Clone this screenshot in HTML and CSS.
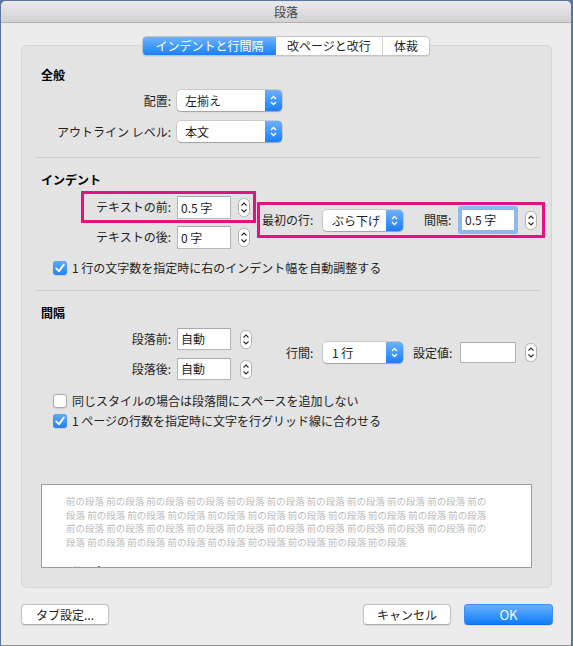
FILE: index.html
```html
<!DOCTYPE html>
<html lang="ja">
<head>
<meta charset="utf-8">
<title>段落</title>
<link rel="stylesheet" href="styles.css">
</head>
<body>
<div class="win">
  <div class="titlebar">段落</div>
  <div class="tabs">
    <span class="seg sel">インデントと行間隔</span><span class="seg s2">改ページと改行</span><span class="seg s3">体裁</span>
  </div>
  <div class="panel">
    <div class="heading h-general">全般</div>
    <div class="frow r1">
      <span class="lbl lw149">配置:</span>
      <span class="popup w105"><span class="ptext">左揃え</span><span class="parrow"><svg width="7" height="11" viewBox="0 0 7 11"><path d="M1 4 L3.5 1.5 L6 4 M1 7 L3.5 9.5 L6 7" fill="none" stroke="#fff" stroke-width="1.3"/></svg></span></span>
    </div>
    <div class="frow r2">
      <span class="lbl lw149">アウトライン レベル:</span>
      <span class="popup w105"><span class="ptext">本文</span><span class="parrow"><svg width="7" height="11" viewBox="0 0 7 11"><path d="M1 4 L3.5 1.5 L6 4 M1 7 L3.5 9.5 L6 7" fill="none" stroke="#fff" stroke-width="1.3"/></svg></span></span>
    </div>
    <div class="sep sep1"></div>

    <div class="heading h-indent">インデント</div>
    <div class="indent">
      <div class="icol">
        <div class="irow mark">
          <span class="lbl lw87">テキストの前:</span>
          <span class="field fw54">0.5 字</span>
          <span class="stepper st7"><svg width="12" height="19" viewBox="0 0 12 19"><rect x=".5" y=".5" width="11" height="18" rx="5" fill="#fff" stroke="#b0b0b0"/><path d="M3.5 7.5 L6 5 L8.5 7.5 M3.5 11.5 L6 14 L8.5 11.5" fill="none" stroke="#2b2b2b" stroke-width="1.1"/></svg></span>
        </div>
        <div class="irow irow2">
          <span class="lbl lw87">テキストの後:</span>
          <span class="field fw54">0 字</span>
          <span class="stepper st7"><svg width="12" height="19" viewBox="0 0 12 19"><rect x=".5" y=".5" width="11" height="18" rx="5" fill="#fff" stroke="#b0b0b0"/><path d="M3.5 7.5 L6 5 L8.5 7.5 M3.5 11.5 L6 14 L8.5 11.5" fill="none" stroke="#2b2b2b" stroke-width="1.1"/></svg></span>
        </div>
      </div>
      <div class="igroup mark">
        <span class="lbl lw55">最初の行:</span>
        <span class="popup w80"><span class="ptext pt9">ぶら下げ</span><span class="parrow"><svg width="7" height="11" viewBox="0 0 7 11"><path d="M1 4 L3.5 1.5 L6 4 M1 7 L3.5 9.5 L6 7" fill="none" stroke="#fff" stroke-width="1.3"/></svg></span></span>
        <span class="lbl lw28 ml21">間隔:</span>
        <span class="field fw54 focus">0.5 字</span>
        <span class="stepper st10"><svg width="12" height="19" viewBox="0 0 12 19"><rect x=".5" y=".5" width="11" height="18" rx="5" fill="#fff" stroke="#b0b0b0"/><path d="M3.5 7.5 L6 5 L8.5 7.5 M3.5 11.5 L6 14 L8.5 11.5" fill="none" stroke="#2b2b2b" stroke-width="1.1"/></svg></span>
      </div>
    </div>
    <div class="cbrow cb-auto">
      <span class="cb on"><svg width="14" height="14" viewBox="0 0 14 14"><path d="M3.2 7.4 L5.9 10.2 L10.8 3.6" fill="none" stroke="#fff" stroke-width="1.9" stroke-linecap="round" stroke-linejoin="round"/></svg></span>
      <span>1 行の文字数を指定時に右のインデント幅を自動調整する</span>
    </div>
    <div class="sep sep2"></div>

    <div class="heading h-spacing">間隔</div>
    <div class="spacing">
      <div class="scol">
        <div class="srow">
          <span class="lbl lw149">段落前:</span>
          <span class="field fw54 fh22">自動</span>
          <span class="stepper st9"><svg width="12" height="19" viewBox="0 0 12 19"><rect x=".5" y=".5" width="11" height="18" rx="5" fill="#fff" stroke="#b0b0b0"/><path d="M3.5 7.5 L6 5 L8.5 7.5 M3.5 11.5 L6 14 L8.5 11.5" fill="none" stroke="#2b2b2b" stroke-width="1.1"/></svg></span>
        </div>
        <div class="srow srow2">
          <span class="lbl lw149">段落後:</span>
          <span class="field fw54 fh22">自動</span>
          <span class="stepper st9"><svg width="12" height="19" viewBox="0 0 12 19"><rect x=".5" y=".5" width="11" height="18" rx="5" fill="#fff" stroke="#b0b0b0"/><path d="M3.5 7.5 L6 5 L8.5 7.5 M3.5 11.5 L6 14 L8.5 11.5" fill="none" stroke="#2b2b2b" stroke-width="1.1"/></svg></span>
        </div>
      </div>
      <div class="sgroup">
        <span class="lbl lw29">行間:</span>
        <span class="popup w80"><span class="ptext pt9">1 行</span><span class="parrow"><svg width="7" height="11" viewBox="0 0 7 11"><path d="M1 4 L3.5 1.5 L6 4 M1 7 L3.5 9.5 L6 7" fill="none" stroke="#fff" stroke-width="1.3"/></svg></span></span>
        <span class="lbl lw38 ml10">設定値:</span>
        <span class="field fw56 fh21"></span>
        <span class="stepper st9"><svg width="12" height="19" viewBox="0 0 12 19"><rect x=".5" y=".5" width="11" height="18" rx="5" fill="#fff" stroke="#b0b0b0"/><path d="M3.5 7.5 L6 5 L8.5 7.5 M3.5 11.5 L6 14 L8.5 11.5" fill="none" stroke="#2b2b2b" stroke-width="1.1"/></svg></span>
      </div>
    </div>
    <div class="cbrow cb-a">
      <span class="cb"></span>
      <span>同じスタイルの場合は段落間にスペースを追加しない</span>
    </div>
    <div class="cbrow cb-b">
      <span class="cb on"><svg width="14" height="14" viewBox="0 0 14 14"><path d="M3.2 7.4 L5.9 10.2 L10.8 3.6" fill="none" stroke="#fff" stroke-width="1.9" stroke-linecap="round" stroke-linejoin="round"/></svg></span>
      <span>1 ページの行数を指定時に文字を行グリッド線に合わせる</span>
    </div>

    <div class="preview">
      <div class="pv-line">前の段落 前の段落 前の段落 前の段落 前の段落 前の段落 前の段落 前の段落 前の段落 前の段落 前の</div>
      <div class="pv-line">段落 前の段落 前の段落 前の段落 前の段落 前の段落 前の段落 前の段落 前の段落 前の段落 前の段落</div>
      <div class="pv-line">前の段落 前の段落 前の段落 前の段落 前の段落 前の段落 前の段落 前の段落 前の段落 前の段落 前の</div>
      <div class="pv-line">段落 前の段落 前の段落 前の段落 前の段落 前の段落 前の段落 前の段落 前の段落</div>
      <div class="pv-next">サンプル</div>
    </div>
  </div>

  <div class="buttons">
    <span class="btn b-tab">タブ設定...</span>
    <span class="btn b-cancel">キャンセル</span>
    <span class="btn b-ok">OK</span>
  </div>
</div>
</body>
</html>
```

FILE: styles.css
```css
* { box-sizing: border-box; }

body {
  margin: 0;
  background: #5a76a0;
  font-family: "Noto Sans CJK JP", "Noto Sans", sans-serif;
  font-size: 12px;
  color: #1e1e1e;
}

.win {
  width: 570px;
  height: 645px;
  margin: 1px 0 0 1px;
  background: #ececec;
  border-radius: 5px 5px 0 0;
  border-bottom: 1px solid #8f8f8f;
  overflow: hidden;
}

.titlebar {
  height: 22px;
  line-height: 21px;
  text-align: center;
  color: #3f3f3f;
  background: linear-gradient(#ebe9eb, #d3d1d3);
  border-bottom: 1px solid #b0b0b0;
}

/* segmented tabs */
.tabs {
  position: relative;
  z-index: 1;
  display: flex;
  width: 288px;
  height: 20px;
  margin: 13px auto 0;
  background: #fff;
  border: 1px solid #c4c4c4;
  border-radius: 4px;
  overflow: hidden;
  box-shadow: 0 1px 1px rgba(0,0,0,.08);
}
.seg {
  text-align: center;
  line-height: 18px;
  color: #1e1e1e;
}
.seg.sel {
  width: 133px;
  background: linear-gradient(#6db3fb, #1980fb);
  color: #fff;
}
.seg.s2 { width: 106px; }
.seg.s3 { flex: 1; border-left: 1px solid #d4d4d4; }

/* panel */
.panel {
  width: 531px;
  height: 543px;
  margin: -11px 0 0 20px;
  background: #e3e3e3;
  border: 1px solid #d6d6d6;
  border-radius: 5px;
}

.heading {
  font-weight: bold;
  line-height: 16px;
  margin-left: 19px;
  color: #000;
}
.h-general { margin-top: 21px; }
.h-indent { margin-top: 14px; }
.h-spacing { margin-top: 14px; }

.lbl {
  flex: none;
  line-height: 16px;
  white-space: nowrap;
}
.lw149 { width: 149px; margin-right: 6px; text-align: right; }
.lw87 { width: 87px; margin-right: 6px; text-align: right; }
.lw55 { width: 55px; margin-right: 6px; }
.lw28 { width: 28px; margin-right: 9px; }
.lw29 { width: 29px; margin-right: 8px; }
.lw38 { width: 38px; margin-right: 9px; }
.ml21 { margin-left: 21px; }
.ml10 { margin-left: 10px; }

.frow {
  display: flex;
  align-items: center;
  height: 21px;
}
.r1 { margin-top: 7px; }
.r2 { margin-top: 10px; }

/* popup button */
.popup {
  display: flex;
  flex: none;
  height: 21px;
  background: #fff;
  border-radius: 4px;
  box-shadow: 0 0 0 .5px rgba(0,0,0,.22), 0 1px 1px rgba(0,0,0,.2);
}
.w105 { width: 105px; }
.w80 { width: 80px; }
.ptext {
  flex: 1;
  padding-left: 8px;
  line-height: 21px;
  white-space: nowrap;
}
.ptext.pt9 { padding-left: 9px; }
.parrow {
  width: 17px;
  flex: none;
  display: flex;
  align-items: center;
  justify-content: center;
  background: linear-gradient(#6cb1fa, #1a7ffa);
  border-radius: 0 4px 4px 0;
}
.parrow svg { display: block; }

/* text field */
.field {
  flex: none;
  height: 23px;
  background: #fff;
  border: 1px solid #b6b6b6;
  border-top-color: #a8a8a8;
  padding-left: 3px;
  line-height: 21px;
  white-space: nowrap;
}
.fw54 { width: 54px; }
.fw56 { width: 56px; }
.fh22 { height: 22px; line-height: 20px; }
.fh21 { height: 21px; }
.field.focus {
  height: 22px;
  line-height: 20px;
  border-color: #8fb3e3;
  box-shadow: 0 0 0 3px #8db8ee;
  border-radius: 1px;
}

.stepper { flex: none; display: flex; }
.stepper svg { display: block; }
.st7 { margin-left: 7px; }
.st9 { margin-left: 9px; }
.st10 { margin-left: 10px; }

.sep {
  height: 1px;
  width: 506px;
  margin-left: 13px;
  background: #cdcdcd;
}
.sep1 { margin-top: 15px; }
.sep2 { margin-top: 14px; }

/* indent block */
.mark { outline: 3px solid #e4127f; }

.indent {
  display: flex;
  align-items: flex-start;
  margin: 6px 0 0 62px;
}
.icol { width: 169px; flex: none; }
.irow {
  display: flex;
  align-items: center;
  height: 26px;
}
.irow2 { margin-top: 4px; }
.igroup {
  display: flex;
  align-items: center;
  width: 282px;
  height: 30px;
  margin: 11px 0 0 7px;
  padding-left: 2px;
}

/* checkboxes */
.cbrow {
  display: flex;
  align-items: center;
  height: 16px;
  margin-left: 31px;
  line-height: 16px;
  white-space: nowrap;
}
.cb-auto { margin-top: 10px; }
.cb-a { margin-top: 13px; }
.cb-b { margin-top: 4px; }
.cb {
  flex: none;
  width: 14px;
  height: 14px;
  margin-right: 5px;
  background: #fff;
  border: 1px solid #a9a9a9;
  border-radius: 3px;
  box-shadow: 0 .5px 1px rgba(0,0,0,.1);
}
.cb.on {
  border: none;
  background: linear-gradient(#5ea8f9, #2383f6);
}
.cb svg { display: block; }

/* spacing block */
.spacing {
  display: flex;
  align-items: center;
  margin-top: 7px;
}
.scol { flex: none; }
.srow {
  display: flex;
  align-items: center;
  height: 22px;
}
.srow2 { margin-top: 8px; }
.sgroup {
  display: flex;
  align-items: center;
  height: 22px;
  margin: -3px 0 0 34px;
}

/* preview */
.preview {
  width: 491px;
  height: 84px;
  margin: 55px 0 0 19px;
  background: #fff;
  border: 1px solid #9b9b9b;
  overflow: hidden;
  padding: 10px 0 0 24px;
  font-size: 9.5px;
  line-height: 13.5px;
  color: #bcbcbc;
  white-space: nowrap;
}
.pv-next {
  margin-top: 15px;
  padding-left: 6px;
  color: #1a1a40;
}

/* buttons */
.buttons {
  display: flex;
  width: 532px;
  margin: 16px 0 0 20px;
}
.btn {
  height: 21px;
  line-height: 19px;
  text-align: center;
  background: #fff;
  border: 1px solid #c2c2c2;
  border-bottom-color: #ababab;
  border-radius: 4px;
  box-shadow: 0 .5px 1px rgba(0,0,0,.08);
  white-space: nowrap;
}
.b-tab { width: 88px; }
.b-cancel { width: 88px; margin-left: auto; }
.b-ok {
  width: 89px;
  margin-left: 13px;
  background: linear-gradient(#6ab1fa, #0e7cfa);
  border-color: #3d8ff7;
  border-bottom-color: #1570e8;
  color: #fff;
  font-size: 13px;
}
```
